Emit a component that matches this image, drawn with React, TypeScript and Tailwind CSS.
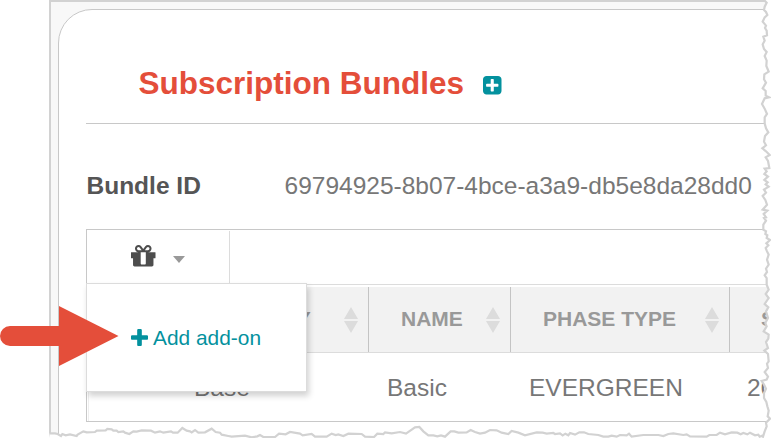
import React from "react";

type Pt = [number, number];

const scale = (points: Pt[], x: number, y: number): Pt[] =>
  points.map(([a, b]) => [x + a / 3, y + b / 3]);

const bottomLeft = scale(
  [[14,100],[30,100],[38,102],[48,108],[52,102],[62,106],[75,103],[95,108],[98,104],[115,94],[125,97],[150,96],[155,92],[182,91],[187,87],[200,88],[205,92],[215,92],[220,96],[235,94],[240,98],[253,102],[265,94],[275,95],[290,91],[318,92],[330,98],[345,94],[355,98],[378,94],[384,98],[398,98],[412,84],[425,92],[435,94],[440,97],[450,90],[460,98],[480,97],[500,86],[512,96],[525,98],[530,104],[550,108],[560,110],[600,107],[620,112],[637,109],[645,105],[655,111],[690,111],[702,101],[722,103],[735,96]],
  45, 400,
);
const bottomMiddle = scale(
  [[0,101],[8,106],[35,102],[45,110],[80,110],[95,101],[107,105],[115,103],[130,108],[145,101],[185,102],[195,110],[222,111],[232,101],[250,102],[255,97],[275,100],[300,96],[318,101],[345,82],[358,81],[370,94],[385,106],[400,106],[412,109],[423,106],[435,110],[452,94],[463,94],[475,98],[500,97],[512,90],[525,96],[540,101],[555,98],[570,90],[590,91],[605,98],[625,102],[635,93],[655,98],[675,106],[710,97],[728,98],[740,101],[760,99]],
  300, 400,
);
const bottomRight = scale(
  [[45,102],[60,100],[68,106],[76,101],[85,106],[90,99],[105,104],[118,97],[132,97],[145,102],[175,105],[190,110],[205,110],[215,107],[230,110],[240,105],[260,106],[267,101],[275,110],[310,105],[355,105],[370,108],[385,102],[400,100],[430,105],[440,103],[450,109],[500,110],[508,105],[530,105],[540,98],[555,103],[575,97],[592,98],[602,103],[610,99],[622,103],[630,98],[645,106],[655,104],[659,110],[667,107]],
  540, 400,
);
const rightLower = scale(
  [[762,0],[768,8],[760,20],[760,35],[768,40],[766,48],[772,52],[770,60],[780,66],[769,76],[775,82],[767,90],[770,98],[776,110],[771,125],[776,140],[768,152],[771,162],[764,172],[770,180],[770,200],[776,215],[767,228],[776,240],[764,258],[775,268],[768,280],[774,300],[766,315],[770,325],[761,340],[776,350],[775,362],[768,372],[774,390],[763,398],[774,408],[776,430],[771,437],[774,450],[764,462],[774,476],[770,485],[755,489],[762,500],[768,512],[762,525],[762,540],[769,552],[772,565],[776,578],[773,595],[780,602],[768,614],[770,625],[764,640],[759,656]],
  510, 218,
);
const rightUpper = scale(
  [[762,0],[770,8],[764,20],[762,30],[768,36],[772,45],[764,52],[758,65],[768,77],[765,84],[770,92],[771,106],[760,110],[764,122],[758,133],[762,147],[770,156],[764,168],[770,182],[769,198],[776,215],[763,223],[762,238],[768,248],[758,265],[767,273],[767,287],[778,292],[764,295],[756,312],[764,326],[771,342],[764,352],[764,370],[768,385],[775,397],[765,408],[762,425],[768,436],[757,445],[768,454],[779,465],[767,472],[774,483],[778,504],[764,506],[770,514],[763,522],[774,530],[763,540],[773,547],[767,553],[776,560],[762,569],[768,578],[758,588],[766,600],[771,614],[758,629],[772,632],[761,642],[768,652]],
  510, 0,
);
const tear: Pt[] = [
  ...bottomLeft,
  ...bottomMiddle,
  ...bottomRight,
  ...[...rightLower].reverse(),
  ...[...rightUpper].reverse(),
];
const tearLine = tear.map((p) => p.join(",")).join(" ");

function TornEdge() {
  return (
    <svg className="pointer-events-none absolute inset-0" width="771" height="438">
      <polygon fill="#fff" points={`${tearLine} 771,0 771,438 49,438`} />
      <polyline fill="none" stroke="#d2d2d2" strokeWidth="2.2" points={tearLine} />
    </svg>
  );
}

function PlusSquare() {
  return (
    <svg className="mt-[4.5px] ml-[19px] h-[18.5px] w-[18.5px] fill-[#03919e]" viewBox="128 128 1536 1536">
      <path d="M1408 960v-128q0-26-19-45t-45-19h-320v-320q0-26-19-45t-45-19h-128q-26 0-45 19t-19 45v320h-320q-26 0-45 19t-19 45v128q0 26 19 45t45 19h320v320q0 26 19 45t45 19h128q26 0 45-19t19-45v-320h320q26 0 45-19t19-45zm256-544v960q0 119-84.5 203.5t-203.5 84.5h-960q-119 0-203.5-84.5t-84.5-203.5v-960q0-119 84.5-203.5t203.5-84.5h960q119 0 203.5 84.5t84.5 203.5z" />
    </svg>
  );
}

function Gift() {
  return (
    <svg className="h-[21.5px] w-[24.5px] fill-[#4d4d4d]" viewBox="128 192 1536 1344">
      <path d="M1056 1356v-716h-320v716q0 25 18 38.5t46 13.5h192q28 0 46-13.5t18-38.5zm-456-844h195l-126-161q-26-31-69-31-40 0-68 28t-28 68 28 68 68 28zm688-96q0-40-28-68t-68-28q-43 0-69 31l-125 161h194q40 0 68-28t28-68zm376 256v320q0 14-9 23t-23 9h-96v416q0 40-28 68t-68 28h-1088q-40 0-68-28t-28-68v-416h-96q-14 0-23-9t-9-23v-320q0-14 9-23t23-9h440q-93 0-158.5-65.5t-65.5-158.5 65.5-158.5 158.5-65.5q107 0 168 77l128 165 128-165q61-77 168-77 93 0 158.5 65.5t65.5 158.5-65.5 158.5-158.5 65.5h440q14 0 23 9t9 23z" />
    </svg>
  );
}

function Plus() {
  return (
    <svg className="h-[17px] w-[17px] fill-[#03919e]" viewBox="192 128 1408 1408">
      <path d="M1600 736v192q0 40-28 68t-68 28h-416v416q0 40-28 68t-68 28h-192q-40 0-68-28t-28-68v-416h-416q-40 0-68-28t-28-68v-192q0-40 28-68t68-28h416v-416q0-40 28-68t68-28h192q40 0 68 28t28 68v416h416q40 0 68 28t28 68z" />
    </svg>
  );
}

function Sort() {
  return (
    <svg className="h-[26px] w-[14px] shrink-0 fill-[#dcdcdc]" viewBox="0 0 14 26">
      <path d="M7 0l7 12H0zM0 14h14L7 26z" />
    </svg>
  );
}

function HeadCell({ label, className }: { label: string; className: string }) {
  return (
    <div className={`flex h-full shrink-0 items-center justify-between border-r border-[#c4c4c4] pr-[10px] ${className}`}>
      <span className="-mt-[2px]">{label}</span>
      <Sort />
    </div>
  );
}

export default function App() {
  return (
    <div className="relative h-[438px] w-[771px] overflow-hidden bg-white pl-[49px] font-['Liberation_Sans',Arial,sans-serif] whitespace-nowrap">
      <div className="h-full border-t-2 border-l-2 border-[#d2d2d2] bg-[#f8f8f8] pt-[7px] pl-[7px]">
        <div className="h-[460px] w-[760px] rounded-tl-[34px] border border-[#c8c8c8] bg-white pl-[27px]">
          <div className="flex h-[114px] items-center border-b border-[#c8c8c8] pt-[33px] pl-[52.5px]">
            <h1 className="text-[31.5px] leading-[36px] font-bold text-[#e44e3a]">Subscription Bundles</h1>
            <PlusSquare />
          </div>
          <div className="flex h-[105px] items-center pt-5 text-[24.5px]">
            <span className="w-[198.5px] pl-[0.5px] font-bold text-[#555]">Bundle ID</span>
            <span className="text-[#777]">69794925-8b07-4bce-a3a9-db5e8da28dd0</span>
          </div>
          <div className="relative h-[193px] border border-[#c8c8c8]">
            <div className="h-[55px] border-b border-[#dcdcdc] pt-px">
              <div className="flex h-full w-[143px] items-center border-r border-[#dcdcdc] pb-[3px] pl-[44px]">
                <Gift />
                <svg className="mt-[6px] ml-[17px] h-[7px] w-[12px] fill-[#999]" viewBox="0 0 12 7">
                  <path d="M0 0h12L6 7z" />
                </svg>
              </div>
            </div>
            <div className="mt-[2px] flex h-[66px] border-b border-[#dcdcdc] bg-[#f2f2f2] text-[21px] font-bold text-[#999]">
              <HeadCell label="CATEGORY" className="w-[282px] pl-[107px]" />
              <HeadCell label="NAME" className="w-[142px] pl-[32px]" />
              <HeadCell label="PHASE TYPE" className="w-[219px] pl-[32px]" />
              <HeadCell label="START DATE" className="w-[219px] pl-[31px]" />
            </div>
            <div className="ml-px flex h-[68px] items-center border-l border-[#eee] pt-[2px] text-[24.5px] text-[#777]">
              <span className="w-[192px] shrink-0 pl-[105px]">Base</span>
              <span className="ml-[106px] w-[142px] shrink-0">Basic</span>
              <span className="w-[218px] shrink-0">EVERGREEN</span>
              <span>2017</span>
            </div>
            <div className="absolute top-[53px] -left-px flex h-[109px] w-[221px] items-center border border-[#dcdcdc] bg-white pl-[44px] text-[20.9px] text-[#03919e] shadow-[2px_4px_6px_rgba(0,0,0,0.18)]">
              <Plus />
              <span className="mt-px ml-[5px]">Add add-on</span>
            </div>
          </div>
        </div>
      </div>
      <TornEdge />
      <svg className="absolute top-[306px] left-0 fill-[#e44e3a]" width="119" height="60">
        <path d="M10 20H59V0L118.5 30L59 60V40H10A10 10 0 0 1 10 20Z" />
      </svg>
    </div>
  );
}
